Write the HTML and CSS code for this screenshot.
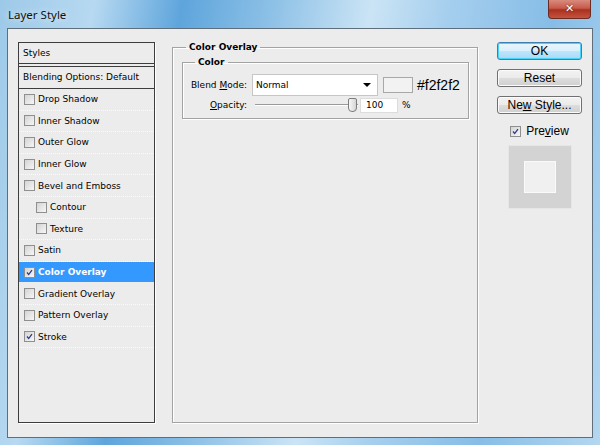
FILE: index.html
```html
<!DOCTYPE html>
<html lang="en">

<head>
    <meta charset="UTF-8">
    <title>Layer Style</title>
    <link rel="stylesheet" href="styles.css">
</head>

<body>
    <div class="window">
        <div class="titlebar">
            <span class="title">Layer Style</span>
            <div class="close">&#x2715;</div>
        </div>

        <div class="client">
            <!-- left list of effects -->
            <div class="styles-list">
                <div class="list-head">Styles</div>
                <div class="list-head blend">Blending Options: Default</div>
                <ul class="effects">
                    <li><span class="check"></span>Drop Shadow</li>
                    <li><span class="check"></span>Inner Shadow</li>
                    <li><span class="check"></span>Outer Glow</li>
                    <li><span class="check"></span>Inner Glow</li>
                    <li><span class="check"></span>Bevel and Emboss</li>
                    <li class="sub"><span class="check"></span>Contour</li>
                    <li class="sub"><span class="check"></span>Texture</li>
                    <li><span class="check"></span>Satin</li>
                    <li class="selected"><span class="check on"><svg viewBox="0 0 11 11"><path d="M2.5 5.5 L4.5 8 L8.5 2.5" /></svg></span>Color Overlay</li>
                    <li><span class="check"></span>Gradient Overlay</li>
                    <li><span class="check"></span>Pattern Overlay</li>
                    <li><span class="check on"><svg viewBox="0 0 11 11"><path d="M2.5 5.5 L4.5 8 L8.5 2.5" /></svg></span>Stroke</li>
                </ul>
            </div>

            <!-- settings -->
            <fieldset class="group outer">
                <legend>Color Overlay</legend>
                <fieldset class="group inner">
                    <legend>Color</legend>
                    <div class="row">
                        <label class="lbl">Blend <u>M</u>ode:</label>
                        <div class="select">Normal<span class="arrow"></span></div>
                        <div class="swatch"></div>
                        <span class="hex">#f2f2f2</span>
                    </div>
                    <div class="row second">
                        <label class="lbl"><u>O</u>pacity:</label>
                        <div class="slider"><span class="thumb"></span></div>
                        <div class="num">100</div>
                        <span class="pct">%</span>
                    </div>
                </fieldset>
            </fieldset>

            <!-- buttons -->
            <div class="actions">
                <button class="btn default">OK</button>
                <button class="btn">Reset</button>
                <button class="btn">Ne<u>w</u> Style...</button>
                <div class="preview-check">
                    <span class="check on"><svg viewBox="0 0 11 11"><path d="M2.5 5.5 L4.5 8 L8.5 2.5" /></svg></span>
                    <span>Pre<u>v</u>iew</span>
                </div>
                <div class="preview">
                    <div class="preview-inner"></div>
                </div>
            </div>
        </div>
        <div class="frame-bottom"></div>
    </div>
</body>

</html>
```

FILE: styles.css
```css
body {
    margin: 0;
    padding: 0;
    font-family: "DejaVu Sans", sans-serif;
    font-size: 9px;
    color: #000;
}

.window {
    width: 600px;
    height: 445px;
    display: flex;
    flex-direction: column;
    background: linear-gradient(100deg, #9dc9e8 0%, #b7d9f1 14%, #5ea5dc 27%, #8cc0e6 40%, #cbe4f5 55%, #a6cfee 66%, #86bde7 82%, #b5d7f0 100%);
    overflow: hidden;
}

.titlebar {
    height: 28px;
    display: flex;
    align-items: flex-start;
    justify-content: space-between;
}

.title {
    font-family: "Noto Sans", sans-serif;
    font-size: 11.5px;
    margin: 7px 0 0 8px;
    color: #111;
    text-shadow: 0 0 6px rgba(255, 255, 255, 0.9);
}

.close {
    width: 41px;
    height: 18px;
    margin-right: 9px;
    border: 1px solid #6b2c24;
    border-top: none;
    border-radius: 0 0 4px 4px;
    background: linear-gradient(#d98b7e 0%, #c75b4a 45%, #a9301f 55%, #c5533e 100%);
    color: #fff;
    font-family: "DejaVu Sans", sans-serif;
    font-size: 11px;
    font-weight: bold;
    text-align: center;
    line-height: 17px;
    text-shadow: 0 0 2px #5a1a10;
}

.client {
    flex: 1;
    margin: 0 7px;
    border: 1px solid #5f6e7b;
    background: #ececec;
    display: flex;
    align-items: stretch;
    padding: 11px 0 14px 10px;
}

/* list */
.styles-list {
    width: 137px;
    box-sizing: border-box;
    margin-top: 2px;
    border: 1px solid #3d3d3d;
    box-shadow: 1px 1px 0 #fff;
    background: #ececec;
}

.list-head {
    height: 20px;
    line-height: 20px;
    padding-left: 4px;
    border-bottom: 1px solid #3d3d3d;
}

.list-head.blend {
    height: 21px;
    line-height: 21px;
    margin-top: 2px;
    border-top: 1px solid #3d3d3d;
}

.effects {
    list-style: none;
    margin: 0;
    padding: 0;
}

.effects li {
    height: 21.6px;
    box-sizing: border-box;
    border-bottom: 1px dotted #fbfbfb;
    display: flex;
    align-items: center;
    padding-left: 5px;
}

.effects li.sub {
    padding-left: 17px;
}

.effects li.selected {
    background: #3399ff;
    background-clip: padding-box;
    border-bottom-color: transparent;
    color: #fff;
    font-weight: bold;
}

.check {
    width: 11px;
    height: 11px;
    box-sizing: border-box;
    border: 1px solid #8f8f8f;
    background: linear-gradient(135deg, #d4d4d4, #f6f6f6);
    margin-right: 3px;
    display: inline-block;
    flex: none;
}

.check svg {
    display: block;
    width: 9px;
    height: 9px;
}

.check path {
    fill: none;
    stroke: #2a3c8a;
    stroke-width: 1.6;
}

/* fieldsets */
.group {
    margin: 0;
    border: 1px solid #a3a3a3;
    box-shadow: 1px 1px 0 #fff, inset 1px 1px 0 #fff;
}

.group legend {
    font-weight: bold;
    line-height: 14px;
    padding: 0 3px;
}

.outer {
    width: 306px;
    box-sizing: border-box;
    margin-left: 17px;
    padding: 1px 8px 0 9px;
}

.outer > legend {
    margin-left: 4px;
}

.inner {
    padding: 0 0 5px 0;
}

.inner > legend {
    margin-left: 12px;
}

.row {
    display: flex;
    align-items: center;
    margin-top: 5px;
    height: 22px;
}

.row.second {
    margin-top: 1px;
    height: 16px;
}

.lbl {
    width: 64px;
    text-align: right;
    flex: none;
}

.select {
    width: 126px;
    height: 22px;
    box-sizing: border-box;
    margin-left: 5px;
    border: 1px solid #c6c6c6;
    background: #fff;
    padding-left: 3px;
    display: flex;
    align-items: center;
    justify-content: space-between;
}

.arrow {
    width: 0;
    height: 0;
    margin-right: 6px;
    border-left: 4px solid transparent;
    border-right: 4px solid transparent;
    border-top: 4px solid #000;
}

.swatch {
    width: 30px;
    height: 16px;
    box-sizing: border-box;
    margin-left: 5px;
    border: 1px solid #a8a8a8;
    background: #f2f2f2;
}

.hex {
    font-family: "Liberation Sans", sans-serif;
    font-size: 14px;
    margin-left: 4px;
}

.slider {
    width: 103px;
    height: 16px;
    margin-left: 8px;
    position: relative;
    background: linear-gradient(#ececec 7px, #9b9b9b 7px, #9b9b9b 8px, #ffffff 8px, #ffffff 9px, #ececec 9px);
}

.thumb {
    position: absolute;
    left: 93px;
    top: 1px;
    width: 9px;
    height: 14px;
    box-sizing: border-box;
    border: 1px solid #7d7d7d;
    border-radius: 2px 2px 4px 4px;
    background: linear-gradient(90deg, #f7f7f7, #d5d5d5);
}

.num {
    width: 38px;
    height: 15px;
    box-sizing: border-box;
    margin-left: 2px;
    border: 1px solid #dcdcdc;
    background: #fff;
    padding-left: 5px;
    line-height: 13px;
}

.pct {
    margin-left: 4px;
}

/* buttons */
.actions {
    width: 85px;
    margin-left: 19px;
    margin-top: 2px;
    display: flex;
    flex-direction: column;
    align-items: center;
}

.btn {
    width: 85px;
    height: 18px;
    padding: 0;
    margin-bottom: 9px;
    border: 1px solid #707070;
    border-radius: 3px;
    background: linear-gradient(#f2f2f2 0%, #ebebeb 50%, #dddddd 51%, #cfcfcf 100%);
    font-family: "Liberation Sans", sans-serif;
    font-size: 12px;
    color: #000;
    box-shadow: inset 0 0 0 1px #fbfbfb;
}

.btn.default {
    border-color: #3c7fb1;
    background: linear-gradient(#eaf6fd 0%, #d9f0fc 50%, #bee6fd 51%, #a7d9f5 100%);
    box-shadow: inset 0 0 0 1px #48d2f8;
}

.preview-check {
    display: flex;
    align-items: center;
    margin-top: 1px;
    font-family: "Liberation Sans", sans-serif;
    font-size: 12px;
}

.preview-check .check {
    margin-right: 5px;
}

.preview {
    width: 64px;
    height: 64px;
    box-sizing: border-box;
    margin-top: 7px;
    border: 1px solid #e6e6e6;
    background: #d3d3d3;
    display: flex;
    align-items: center;
    justify-content: center;
}

.preview-inner {
    width: 32px;
    height: 32px;
    box-sizing: border-box;
    border: 1px solid #fafafa;
    background: #f0f0f0;
}

.frame-bottom {
    height: 7px;
}
```
